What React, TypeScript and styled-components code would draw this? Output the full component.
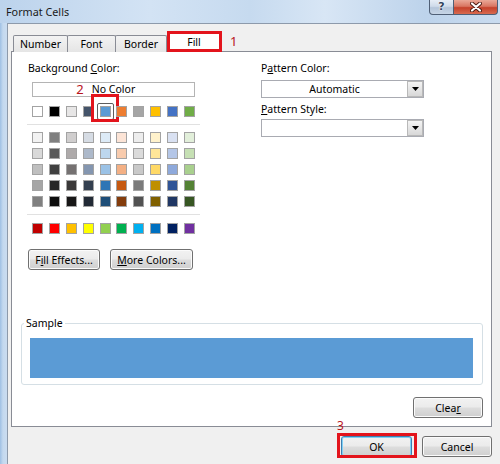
import React from 'react';
import styled, { createGlobalStyle, css } from 'styled-components';

const FONT = `"Noto Sans", "DejaVu Sans", sans-serif`;

const Global = createGlobalStyle`
  html, body { margin: 0; padding: 0; background: #f0f0f0; }
  body { font-family: ${FONT}; }
  * { box-sizing: border-box; }
`;

const Window = styled.div`
  width: 500px;
  height: 464px;
  overflow: hidden;
  display: flex;
  flex-direction: column;
  background: linear-gradient(to right, #9fc0e4 0px, #c4d9ef 3px, #cadcf0 7px);
  font-family: ${FONT};
  font-size: 10.5px;
  color: #000;
`;

const TitleBar = styled.div`
  height: 23px;
  flex: none;
  display: flex;
  align-items: flex-start;
  background: linear-gradient(to right, #bcd3ec 0%, #d3e3f4 30%, #c6daef 50%, #d8e6f5 65%, #bdd3eb 85%, #c9dbef 100%);
`;

const Title = styled.div`
  padding: 5px 0 0 6px;
  font-size: 10.8px;
  line-height: 14px;
  color: #1a1a1a;
`;

const CaptionButtons = styled.div`
  margin-left: auto;
  margin-right: 2px;
  display: flex;
`;

const CaptionButton = styled.div<{ $close?: boolean }>`
  height: 15px;
  display: flex;
  align-items: center;
  justify-content: center;
  border: 1px solid #4f5f76;
  border-top: none;
  ${(p) =>
    p.$close
      ? css`
          width: 44px;
          border-radius: 0 0 4px 0;
          border-left: none;
          background: linear-gradient(#eaa898 0%, #d97662 45%, #c5412b 55%, #d86a50 100%);
        `
      : css`
          width: 25px;
          border-radius: 0 0 0 4px;
          background: linear-gradient(#e6edf6 0%, #cfdbea 45%, #b4c5da 55%, #c7d5e6 100%);
        `}
`;

const HelpGlyph = styled.span`
  font-family: "DejaVu Sans", sans-serif;
  font-size: 11px;
  font-weight: bold;
  line-height: 12px;
  color: #33445e;
  text-shadow: 0 0 1px #fff, 0 0 2px #fff;
`;

const Client = styled.div`
  flex: 1;
  margin-left: 7px;
  border-left: 1px solid #8d9aab;
  border-top: 1px solid #8d9aab;
  background: #f0f0f0;
  padding: 8px 8px 7px 3px;
  display: flex;
  flex-direction: column;
`;

const TabStrip = styled.div`
  height: 20px;
  flex: none;
  display: flex;
  align-items: flex-end;
  padding-left: 2px;
  position: relative;
  z-index: 2;
`;

const Tab = styled.div<{ $w: number; $selected?: boolean }>`
  width: ${(p) => p.$w}px;
  height: ${(p) => (p.$selected ? 20 : 17)}px;
  border: 1px solid #898c95;
  border-bottom: none;
  border-radius: 2px 2px 0 0;
  display: flex;
  align-items: center;
  justify-content: center;
  line-height: 14px;
  padding-bottom: 1px;
  background: ${(p) => (p.$selected ? '#fff' : 'linear-gradient(#f3f3f3, #e5e5e5)')};
  & + & {
    margin-left: -1px;
  }
`;

const Marked = styled.div<{ $t: number; $r: number; $b: number; $l: number }>`
  position: relative;
  &::after {
    content: '';
    position: absolute;
    top: ${(p) => p.$t}px;
    right: ${(p) => p.$r}px;
    bottom: ${(p) => p.$b}px;
    left: ${(p) => p.$l}px;
    border: 3px solid #e3141c;
    pointer-events: none;
  }
`;

const TabMarked = styled(Marked)`
  margin-left: 1px;
`;

const StepNumber = styled.span`
  color: #b8141c;
  font-size: 13px;
  line-height: 14px;
`;

const TabStep = styled(StepNumber)`
  align-self: flex-start;
  margin: 2px 0 0 10px;
`;

const Panel = styled.div`
  flex: 1;
  margin-top: -1px;
  background: #fff;
  border: 1px solid #898c95;
  padding: 9px 8px 8px 9px;
  display: flex;
  flex-direction: column;
  position: relative;
  z-index: 1;
`;

const Columns = styled.div`
  display: flex;
  gap: 61px;
  padding-left: 6px;
`;

const LeftCol = styled.div`
  width: 173px;
  display: flex;
  flex-direction: column;
`;

const RightCol = styled.div`
  width: 163px;
  display: flex;
  flex-direction: column;
`;

const Label = styled.div<{ $mt?: number; $pl?: number }>`
  line-height: 14px;
  margin-top: ${(p) => p.$mt ?? 0}px;
  padding-left: ${(p) => p.$pl ?? 0}px;
  white-space: nowrap;
`;

const Acc = styled.span`
  text-decoration: underline;
  text-underline-offset: 1px;
`;

const NoColor = styled.div`
  margin: 7px 0 0 5px;
  width: 163px;
  height: 15px;
  border: 1px solid #b4b4b4;
  background: #fff;
  display: flex;
  align-items: center;
  justify-content: center;
  line-height: 13px;
`;

const NoColorText = styled.span`
  position: relative;
`;

const InlineStep = styled(StepNumber)`
  position: absolute;
  right: calc(100% + 8px);
  top: -1px;
`;

const SwatchRow = styled.div<{ $mt: number }>`
  margin: ${(p) => p.$mt}px 0 0 5px;
  width: 163px;
  display: flex;
  justify-content: space-between;
`;

const SwatchGrid = styled.div`
  margin: 7px 0 0 5px;
  width: 163px;
  display: grid;
  grid-template-columns: repeat(10, 11px);
  justify-content: space-between;
  row-gap: 5px;
`;

const Swatch = styled.div<{ $c: string; $selected?: boolean }>`
  width: 11px;
  height: 11px;
  background: ${(p) => p.$c};
  border: 1px solid #a3a3a3;
  position: relative;
  ${(p) =>
    p.$selected &&
    css`
      &::before {
        content: '';
        position: absolute;
        inset: -4px;
        border: 1px solid #5d5d5d;
        border-radius: 2px;
        box-shadow: inset 0 0 0 2px #fff;
      }
    `}
`;

const Separator = styled.div`
  height: 1px;
  background: #e1e1e1;
  margin-top: 7px;
`;

const ButtonRow = styled.div`
  margin-top: 15px;
  padding-left: 1px;
  display: flex;
  gap: 10px;
`;

const Button = styled.div<{ $w: number; $default?: boolean }>`
  width: ${(p) => p.$w}px;
  height: 21px;
  border: 1px solid ${(p) => (p.$default ? '#3c7fb1' : '#707070')};
  border-radius: 3px;
  background: linear-gradient(#f2f2f2 0%, #ebebeb 48%, #dddddd 52%, #cfcfcf 100%);
  box-shadow: inset 0 0 0 1px ${(p) => (p.$default ? '#7fd0f5' : '#fbfbfb')};
  display: flex;
  align-items: center;
  justify-content: center;
  line-height: 14px;
  white-space: nowrap;
`;

const Select = styled.div<{ $mt: number }>`
  margin-top: ${(p) => p.$mt}px;
  height: 18px;
  border: 1px solid #a9abb2;
  background: #fff;
  display: flex;
  padding: 0;
`;

const SelectValue = styled.div`
  flex: 1;
  text-align: center;
  line-height: 16px;
`;

const SelectArrow = styled.div`
  width: 16px;
  height: 16px;
  border: 1px solid #b9b9b9;
  background: linear-gradient(#f4f4f4, #d8d8d8);
  display: flex;
  align-items: center;
  justify-content: center;
`;

const Sample = styled.fieldset`
  margin: auto 0 0 0;
  border: 1px solid #d5dfe5;
  border-radius: 3px;
  padding: 8px 9px 6px 8px;
  min-width: 0;
`;

const SampleLegend = styled.legend`
  margin-left: -6px;
  padding: 0 2px;
  line-height: 14px;
`;

const SampleFill = styled.div<{ $c: string }>`
  height: 40px;
  background: ${(p) => p.$c};
`;

const ClearRow = styled.div`
  margin-top: 12px;
  display: flex;
  justify-content: flex-end;
`;

const Footer = styled.div`
  margin-top: 9px;
  display: flex;
  justify-content: flex-end;
  gap: 10px;
  flex: none;
  position: relative;
  z-index: 3;
`;

const FooterStep = styled(StepNumber)`
  position: absolute;
  top: -17px;
  left: -4px;
  font-size: 12px;
`;

const themeRow = ['#ffffff', '#000000', '#e7e6e6', '#44546a', '#5b9bd5', '#ed7d31', '#a5a5a5', '#ffc000', '#4472c4', '#70ad47'];

const tints = [
  ['#f2f2f2', '#7f7f7f', '#d0cece', '#d6dce4', '#ddebf7', '#fce4d6', '#ededed', '#fff2cc', '#d9e1f2', '#e2efda'],
  ['#d9d9d9', '#595959', '#aeaaaa', '#adb9ca', '#bdd7ee', '#f8cbad', '#dbdbdb', '#ffe699', '#b4c6e7', '#c6e0b4'],
  ['#bfbfbf', '#404040', '#757171', '#8496b0', '#9bc2e6', '#f4b084', '#c9c9c9', '#ffd966', '#8ea9db', '#a9d08e'],
  ['#a6a6a6', '#262626', '#3a3838', '#333f4f', '#2f75b5', '#c65911', '#7b7b7b', '#bf8f00', '#305496', '#548235'],
  ['#808080', '#0d0d0d', '#171616', '#222a35', '#1f4e78', '#833c0c', '#525252', '#806000', '#203764', '#375623'],
];

const standard = ['#c00000', '#ff0000', '#ffc000', '#ffff00', '#92d050', '#00b050', '#00b0f0', '#0070c0', '#002060', '#7030a0'];

const DownArrow = () => (
  <svg width="7" height="4" viewBox="0 0 7 4">
    <path d="M0 0 H7 L3.5 4 Z" fill="#000" />
  </svg>
);

const CloseGlyph = () => (
  <svg width="12" height="10" viewBox="0 0 12 10">
    <path d="M2 1.5 L10 8.5 M10 1.5 L2 8.5" stroke="#4a1a12" strokeWidth="4" strokeLinecap="round" />
    <path d="M2 1.5 L10 8.5 M10 1.5 L2 8.5" stroke="#ffffff" strokeWidth="2.2" strokeLinecap="round" />
  </svg>
);

export default function App() {
  const selectedIndex = 4;
  return (
    <>
      <Global />
      <Window>
        <TitleBar>
          <Title>Format Cells</Title>
          <CaptionButtons>
            <CaptionButton>
              <HelpGlyph>?</HelpGlyph>
            </CaptionButton>
            <CaptionButton $close>
              <CloseGlyph />
            </CaptionButton>
          </CaptionButtons>
        </TitleBar>
        <Client>
          <TabStrip>
            <Tab $w={55}>Number</Tab>
            <Tab $w={49}>Font</Tab>
            <Tab $w={52}>Border</Tab>
            <TabMarked $t={-1} $r={-2} $b={0} $l={-1}>
              <Tab $w={52} $selected>
                Fill
              </Tab>
            </TabMarked>
            <TabStep>1</TabStep>
          </TabStrip>
          <Panel>
            <Columns>
              <LeftCol>
                <Label $pl={1}>
                  Background <Acc>C</Acc>olor:
                </Label>
                <NoColor>
                  <NoColorText>
                    <InlineStep>2</InlineStep>
                    No Color
                  </NoColorText>
                </NoColor>
                <SwatchRow $mt={9}>
                  {themeRow.map((c, i) =>
                    i === selectedIndex ? (
                      <Marked key={c} $t={-12} $r={-8} $b={-5} $l={-9}>
                        <Swatch $c={c} $selected />
                      </Marked>
                    ) : (
                      <Swatch key={c} $c={c} />
                    )
                  )}
                </SwatchRow>
                <Separator />
                <SwatchGrid>
                  {tints.flatMap((row, r) => row.map((c, i) => <Swatch key={`${r}-${i}`} $c={c} />))}
                </SwatchGrid>
                <Separator />
                <SwatchRow $mt={8}>
                  {standard.map((c) => (
                    <Swatch key={c} $c={c} />
                  ))}
                </SwatchRow>
                <ButtonRow>
                  <Button $w={72}>
                    F<Acc>i</Acc>ll Effects...
                  </Button>
                  <Button $w={83}>
                    <Acc>M</Acc>ore Colors...
                  </Button>
                </ButtonRow>
              </LeftCol>
              <RightCol>
                <Label>
                  P<Acc>a</Acc>ttern Color:
                </Label>
                <Select $mt={5}>
                  <SelectValue>Automatic</SelectValue>
                  <SelectArrow>
                    <DownArrow />
                  </SelectArrow>
                </Select>
                <Label $mt={4}>
                  <Acc>P</Acc>attern Style:
                </Label>
                <Select $mt={3}>
                  <SelectValue />
                  <SelectArrow>
                    <DownArrow />
                  </SelectArrow>
                </Select>
              </RightCol>
            </Columns>
            <Sample>
              <SampleLegend>Sample</SampleLegend>
              <SampleFill $c="#5b9bd5" />
            </Sample>
            <ClearRow>
              <Button $w={70}>
                Clea<Acc>r</Acc>
              </Button>
            </ClearRow>
          </Panel>
          <Footer>
            <Marked $t={-3} $r={-5} $b={-1} $l={-4}>
              <FooterStep>3</FooterStep>
              <Button $w={71} $default>
                OK
              </Button>
            </Marked>
            <Button $w={70}>Cancel</Button>
          </Footer>
        </Client>
      </Window>
    </>
  );
}
